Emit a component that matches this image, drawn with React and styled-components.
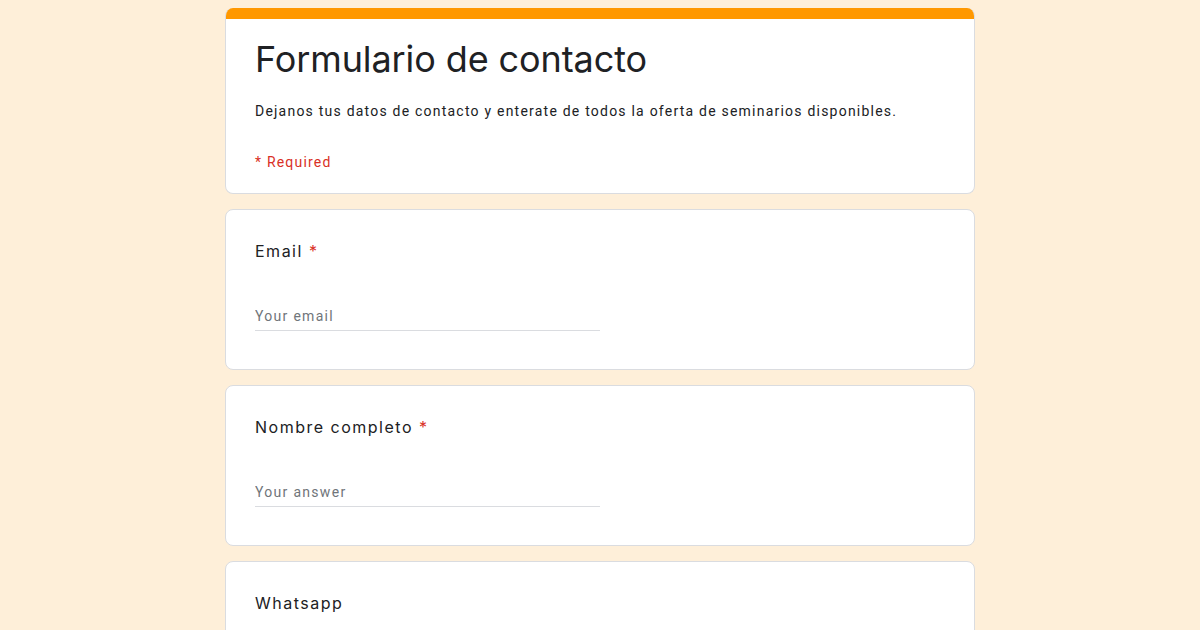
import styled, { createGlobalStyle } from 'styled-components';

const GlobalStyle = createGlobalStyle`
  html, body {
    margin: 0;
    padding: 0;
    background: #feefd9;
    height: 630px;
    overflow: hidden;
  }
`

export default function App() {
    return (
        <>
            <GlobalStyle />
            <Page>
                <HeaderCard>
                    <TopBar />
                    <HeaderBody>
                        <Title>Formulario de contacto</Title>
                        <Description>
                            Dejanos tus datos de contacto y enterate de todos la oferta de seminarios disponibles.
                        </Description>
                        <RequiredNote>* Required</RequiredNote>
                    </HeaderBody>
                </HeaderCard>

                <QuestionCard>
                    <Label>Email <Star>*</Star></Label>
                    <Field placeholder="Your email" />
                </QuestionCard>

                <QuestionCard>
                    <Label>Nombre completo <Star>*</Star></Label>
                    <Field placeholder="Your answer" />
                </QuestionCard>

                <QuestionCard>
                    <Label>Whatsapp</Label>
                    <Field placeholder="Your answer" />
                </QuestionCard>
            </Page>
        </>
    )
}

const Page = styled.main`
    width: 750px;
    margin: 8px auto 0;
    display: flex;
    flex-direction: column;
    gap: 15px;
`

const HeaderCard = styled.section`
    background: #fff;
    border: 1px solid #dadce0;
    border-top: none;
    border-radius: 8px;
    overflow: hidden;
`

const TopBar = styled.div`
    height: 11px;
    background: #ff9800;
`

const HeaderBody = styled.div`
    padding: 18px 29px 21px;
`

const Title = styled.h1`
    margin: 0;
    font-family: Inter, "Open Sans", sans-serif;
    font-weight: 400;
    font-size: 36px;
    line-height: 44px;
    letter-spacing: -0.1px;
    color: #202124;
`

const Description = styled.p`
    margin: 20px 0 0;
    font-family: Roboto, "Liberation Sans", sans-serif;
    font-size: 14px;
    line-height: 20px;
    letter-spacing: 1.22px;
    color: #202124;
`

const RequiredNote = styled.div`
    margin-top: 31px;
    font-family: Roboto, "Liberation Sans", sans-serif;
    font-size: 14px;
    line-height: 20px;
    letter-spacing: 1.2px;
    color: #d93025;
`

const QuestionCard = styled.section`
    background: #fff;
    border: 1px solid #dadce0;
    border-radius: 8px;
    padding: 29px 29px 38px;
    display: flex;
    flex-direction: column;
    align-items: flex-start;
`

const Label = styled.div`
    font-family: Inter, "Open Sans", sans-serif;
    font-size: 16px;
    line-height: 24px;
    letter-spacing: 1.5px;
    color: #202124;
`

const Star = styled.span`
    color: #d93025;
`

const Field = styled.input`
    margin-top: 38px;
    width: 345px;
    height: 30px;
    box-sizing: border-box;
    padding: 0;
    border: none;
    border-bottom: 1px solid #dadce0;
    outline: none;
    background: transparent;
    font-family: Roboto, "Liberation Sans", sans-serif;
    font-size: 14px;
    letter-spacing: 1.3px;
    color: #202124;

    &::placeholder {
        color: #70757a;
    }
`
